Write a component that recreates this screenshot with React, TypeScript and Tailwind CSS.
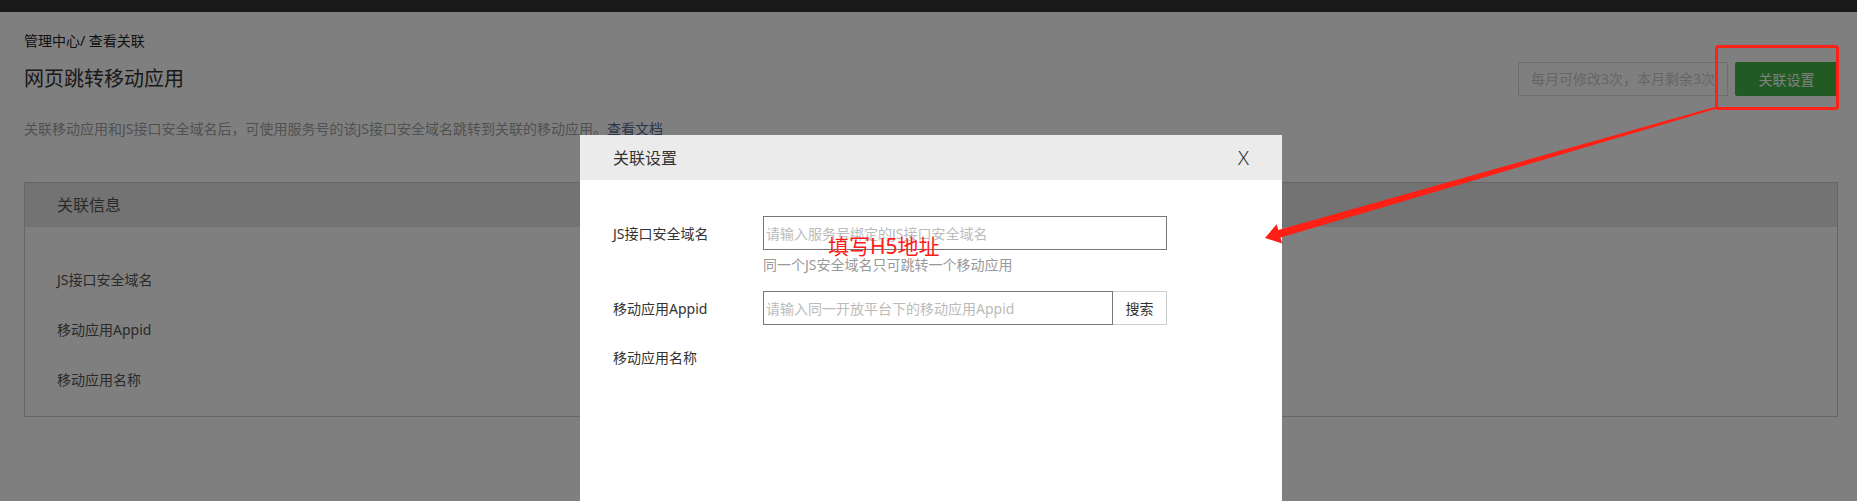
const font = '"Noto Sans", "Noto Sans CJK SC", sans-serif';

function InfoRow({ label }: { label: string }) {
  return <div className="text-[14px] leading-5 text-[#555]">{label}</div>;
}

function BindDialog() {
  return (
    <div className="absolute left-[580px] top-[135px] w-[702px] h-[420px] bg-white">
      <div className="flex items-center justify-between h-[45px] bg-[#ebebeb] pl-[33px] pr-[33px]">
        <span className="text-[16px] text-[#333]">关联设置</span>
        <button className="text-[20px] leading-none text-[#333] font-light">X</button>
      </div>
      <div className="pt-[36px] pl-[33px] text-[14px] text-[#333]">
        <div className="flex">
          <label className="w-[150px] h-[34px] flex items-center">JS接口安全域名</label>
          <div>
            <input
              className="w-[404px] h-[34px] border border-[#777] pl-[2px] outline-none text-[14px] placeholder:text-[#bbb]"
              placeholder="请输入服务号绑定的JS接口安全域名"
            />
            <p className="mt-[5px] leading-5 text-[#999]">同一个JS安全域名只可跳转一个移动应用</p>
          </div>
        </div>
        <div className="flex mt-4">
          <label className="w-[150px] h-[34px] flex items-center">移动应用Appid</label>
          <div className="flex">
            <input
              className="w-[350px] h-[34px] border border-[#777] pl-[2px] outline-none text-[14px] placeholder:text-[#bbb]"
              placeholder="请输入同一开放平台下的移动应用Appid"
            />
            <button className="w-[54px] h-[34px] border border-l-0 border-[#ccc] text-[14px] text-[#333]">
              搜索
            </button>
          </div>
        </div>
        <div className="mt-[23px] leading-5">移动应用名称</div>
      </div>
    </div>
  );
}

export default function App() {
  return (
    <div className="relative w-[1857px] h-[501px] overflow-hidden bg-white" style={{ fontFamily: font }}>
      <div className="h-3 bg-[#333]" />
      <div className="pl-6 pr-[19px]">
        <div className="mt-[19px] text-[14px] leading-5 text-[#222]">管理中心/ 查看关联</div>
        <div className="flex items-center justify-between mt-[11px]">
          <h1 className="text-[20px] leading-7 text-[#333]">网页跳转移动应用</h1>
          <div className="flex items-center gap-[7px]">
            <div className="w-[210px] h-[34px] border border-[#ddd] pl-3 overflow-hidden whitespace-nowrap text-[14px] leading-[32px] text-[#ccc]">
              每月可修改3次，本月剩余3次
            </div>
            <button className="w-[103px] h-[34px] rounded-[2px] bg-[#43b546] text-white text-[14px]">关联设置</button>
          </div>
        </div>
        <p className="mt-[23px] text-[14px] leading-5 text-[#a3a3a3]">
          关联移动应用和JS接口安全域名后，可使用服务号的该JS接口安全域名跳转到关联的移动应用。
          <a className="text-[#576b95]">查看文档</a>
        </p>
        <div className="mt-[43px] border border-[#ccc]">
          <div className="h-[44px] bg-[#e6e6e6] pl-8 flex items-center text-[16px] text-[#555]">关联信息</div>
          <div className="pl-8 pt-[43px] pb-[26px] flex flex-col gap-[30px]">
            <InfoRow label="JS接口安全域名" />
            <InfoRow label="移动应用Appid" />
            <InfoRow label="移动应用名称" />
          </div>
        </div>
      </div>

      <div className="absolute inset-0 bg-black/50" />
      <BindDialog />

      {/* markup drawn over the page */}
      <div className="absolute left-[828px] top-[234px] text-[21px] leading-[24px] text-[#ff1a1a] whitespace-nowrap">
        填写H5地址
      </div>
      <svg className="absolute inset-0 pointer-events-none" width="1857" height="501" viewBox="0 0 1857 501">
        <rect x="1716.5" y="46.5" width="121" height="62" rx="2" fill="none" stroke="#ff2018" strokeWidth="3" />
        <polygon
          points="1265,238 1282.2,243.4 1280.5,237.6 1715.2,108.9 1714.8,107.1 1278.3,230 1276.6,224.2"
          fill="#ff1f14"
        />
      </svg>
    </div>
  );
}
